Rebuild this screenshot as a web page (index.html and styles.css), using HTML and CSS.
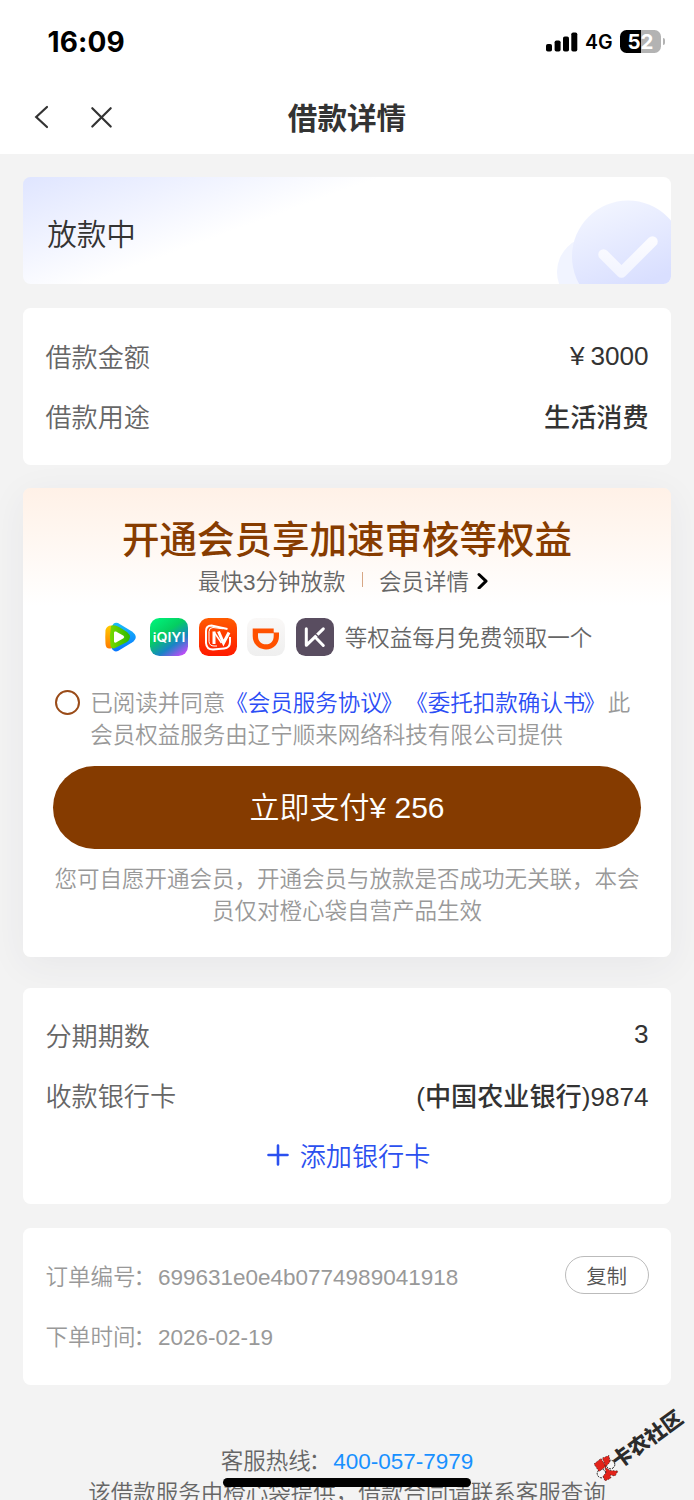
FILE: index.html
```html
<!DOCTYPE html>
<html lang="zh-CN">
<head>
<meta charset="utf-8">
<meta name="viewport" content="width=device-width, initial-scale=1">
<title>借款详情</title>
<link rel="stylesheet" href="styles.css">
</head>
<body>
<div class="screen">
  <header class="top">
    <div class="status">
      <span class="time">16:09</span>
      <div class="indicators">
        <svg class="signal" width="32" height="20" viewBox="0 0 32 20"><rect x="0" y="12" width="6" height="7.5" rx="1.8"/><rect x="8.6" y="8.5" width="6" height="11" rx="1.8"/><rect x="17" y="4.4" width="6" height="15.1" rx="1.8"/><rect x="25.3" y=".4" width="6" height="19.1" rx="1.8"/></svg>
        <span class="network">4G</span>
        <div class="battery">52</div>
        <span class="battery-cap"></span>
      </div>
    </div>
    <nav class="nav">
      <svg class="nav-icons" width="90" height="32" viewBox="0 0 90 32"><path d="M20 6 9.2 16 20 26M65.300 7.200 83.700 25.500M83.700 7.200 65.300 25.500"/></svg>
      <h1 class="title">借款详情</h1>
    </nav>
  </header>

  <main class="content">
    <section class="card state">
      <span>放款中</span>
      <svg class="state-art" width="115" height="84" viewBox="0 0 115 84">
        <defs>
          <linearGradient id="disc" x1="0.3" y1="0" x2="0.6" y2="0.75"><stop offset="0" stop-color="#f2f5ff"/><stop offset="1" stop-color="#d9dfff"/></linearGradient>
          <linearGradient id="tick" x1="0" y1="0" x2="0" y2="1"><stop offset="0" stop-color="#fbfbff"/><stop offset="1" stop-color="#f3f5ff"/></linearGradient>
        </defs>
        <circle cx="36.500" cy="72" r="35.500" fill="#f1f4ff"/>
        <circle cx="72" cy="56.500" r="56" fill="url(#disc)"/>
        <path d="M47.500 54.500 65.500 72.500 96.500 41.500" fill="none" stroke="url(#tick)" stroke-width="10.500" stroke-linecap="round" stroke-linejoin="round"/>
      </svg>
    </section>

    <section class="card rows loan">
      <div class="row"><span class="label">借款金额</span><span class="value"><span class="yen">¥</span>3000</span></div>
      <div class="row"><span class="label">借款用途</span><span class="value">生活消费</span></div>
    </section>

    <section class="card member">
      <h2 class="headline">开通会员享加速审核等权益</h2>
      <div class="subline">
        <span>最快3分钟放款</span><i class="divider"></i><span>会员详情</span>
        <svg class="chevron" width="12" height="18" viewBox="0 0 12 18"><path d="M2 3.500 9 10.200 2 17"/></svg>
      </div>
      <div class="perks">
        <svg width="38" height="38" viewBox="-3 0 38 38">
          <defs><linearGradient id="warm" x1="0" y1="0" x2="0" y2="1"><stop stop-color="#ffcb00"/><stop offset="1" stop-color="#ff7b00"/></linearGradient><linearGradient id="leaf" x1="0" y1="0" x2="1" y2="0"><stop stop-color="#78d900"/><stop offset="1" stop-color="#2fb900"/></linearGradient><linearGradient id="sky" x1="0" y1="0" x2="0" y2="1"><stop stop-color="#18bdf8"/><stop offset="1" stop-color="#0875ff"/></linearGradient></defs>
          <path d="M8 8Q10 3.500 14 5L28 13.500Q35.500 19 28 24.500L14 33Q10 34.500 7.500 30Z" fill="url(#sky)"/>
          <path d="M1.500 12Q3 7 8 7.500L12 12V27L8 30Q2 32 1.500 26Q1 19 1.500 12Z" fill="url(#warm)"/>
          <path d="M7 8Q10 6 15 9L23 14Q29 19 23 24L12 29.500Q8 32 6.500 28Q5 18 7 8Z" fill="url(#leaf)"/>
          <path d="M10 14.500Q10 13 12 13.500L19.500 17.800Q21 19 19.500 20.200L12 24.500Q10 25 10 23.500Z" fill="#fff"/>
        </svg>
        <svg width="38" height="38" viewBox="0 0 38 38">
          <defs><linearGradient id="iq" x1=".2" y1="0" x2=".9" y2="1"><stop offset="0" stop-color="#00ef78"/><stop offset=".35" stop-color="#05ce61"/><stop offset=".67" stop-color="#1884c5"/><stop offset="1" stop-color="#d744ff"/></linearGradient></defs>
          <rect width="38" height="38" rx="9.500" fill="url(#iq)"/>
          <text class="iq-word" x="2.800" y="24" textLength="32.500" lengthAdjust="spacingAndGlyphs">iQIYI</text>
        </svg>
        <svg width="38" height="38" viewBox="0 0 38 38">
          <defs><linearGradient id="mango" x1="0" y1="0" x2="0" y2="1"><stop stop-color="#ff5b00"/><stop offset="1" stop-color="#ff1a00"/></linearGradient></defs>
          <rect width="38" height="38" rx="9.500" fill="url(#mango)"/>
          <path d="M28.500 11 12.500 7.500Q7 7.500 7 13V25Q7.500 31.500 14 31.500L25 30.500Q31 30 31 24V19" fill="none" stroke="#fff" stroke-width="2"/>
          <path d="M24 10.800 14 9.500Q10 9.500 10 13.500V23.500Q10.500 28 15 28H18" fill="none" stroke="#fff" stroke-width="1"/>
          <path d="M15 13.500V26M19.500 13.500 24.500 25 30 14.500" fill="none" stroke="#fff" stroke-width="3"/>
          <path d="M15 14 22.500 25" fill="none" stroke="#fff" stroke-width="1.500"/>
        </svg>
        <svg width="38" height="38" viewBox="0 0 38 38">
          <defs><linearGradient id="pale" x1="0" y1="0" x2="0" y2="1"><stop stop-color="#faf8f7"/><stop offset="1" stop-color="#efefef"/></linearGradient></defs>
          <rect width="38" height="38" rx="9.500" fill="url(#pale)"/>
          <path fill-rule="evenodd" d="M5.700 10.500H26.700V14.500H32V18C32 26 26.500 31.500 19 31.500S5.700 26 5.700 18ZM11 15.200V18C11 23 14 26.300 19 26.300S26.700 23 26.700 18V15.200Z" fill="#ff5100"/>
        </svg>
        <svg width="38" height="38" viewBox="0 0 38 38"><rect width="38" height="38" rx="9.500" fill="#594d60"/><path d="M10.300 10.800V27.300L27.300 10.800M20.500 20.500 27.300 27.500" fill="none" stroke="#fff" stroke-width="3" stroke-linecap="round" stroke-linejoin="round"/><path d="M19 15.500 23.500 19.500" stroke="#594d60" stroke-width="1.200"/></svg>
        <span class="perk-text">等权益每月免费领取一个</span>
      </div>
      <div class="agree">
        <i class="radio"></i>
        <p class="agree-text">已阅读并同意<a class="link">《会员服务协议<span class="close">》</span>《委托扣款确认书<span class="close">》</span></a>此<br>会员权益服务由辽宁顺来网络科技有限公司提供</p>
      </div>
      <button class="pay" type="button">立即支付¥ 256</button>
      <p class="note">您可自愿开通会员，开通会员与放款是否成功无关联，本会<br>员仅对橙心袋自营产品生效</p>
    </section>

    <section class="card rows bank">
      <div class="row"><span class="label">分期期数</span><span class="value">3</span></div>
      <div class="row"><span class="label">收款银行卡</span><span class="value">(中国农业银行)9874</span></div>
      <div class="row add"><svg width="22" height="22" viewBox="0 0 22 22"><path d="M1.500 11H20.500M11 1.500V20.500"/></svg><span>添加银行卡</span></div>
    </section>

    <section class="card rows order">
      <div class="row"><span>订单编号<span class="colon">：</span>699631e0e4b0774989041918</span><button class="copy" type="button">复制</button></div>
      <div class="row"><span>下单时间<span class="colon">：</span>2026-02-19</span></div>
    </section>
  </main>

  <footer class="foot">
    <p>客服热线<span class="colon">：</span><a class="phone">400-057-7979</a></p>
    <p>该借款服务由橙心袋提供，借款合同请联系客服查询</p>
  </footer>

  <div class="home-bar"></div>
  <div class="stamp">
    <svg width="26" height="26" viewBox="0 0 26 26"><g fill="#f7f7f7" stroke="#111" stroke-width="1" stroke-dasharray="2 1"><circle cx="17.500" cy="9.500" r="4.300"/><circle cx="8.500" cy="18.500" r="4.300"/></g><g fill="#e2231a" stroke="#111" stroke-width=".6" stroke-dasharray="1.500 1.500"><path d="M1 9 8 3.500 13 11.500 6 16.500Z"/><path d="M9.500 3 16 .5 17 7 12.500 12Z"/><path d="M12 12 17 15.500 25 16 22 21 17 20 18 23 12 26 10 21 13 18Z"/></g></svg>
    <span class="stamp-text">卡农社区</span>
  </div>
</div>
</body>
</html>
```
FILE: styles.css
```css
* { box-sizing: border-box; margin: 0; padding: 0; }
body { background: #f3f3f3; }
.screen {
  position: relative;
  width: 694px;
  height: 1500px;
  overflow: hidden;
  background: #f3f3f3;
  color: #333;
  font-family: "Liberation Sans", "Noto Sans CJK SC", sans-serif;
  font-weight: 350;
  text-spacing-trim: space-all;
  white-space: nowrap;
}
button { font: inherit; border: 0; }

.top { height: 154px; background: #fff; }
.status { display: flex; justify-content: space-between; height: 82px; padding: 0 29px 0 47.500px; }
.time { font: 700 28px/85px Inter, sans-serif; color: #000; letter-spacing: 0.1px; }
.indicators { display: flex; align-items: center; height: 83px; color: #000; }
.signal { margin-right: 7px; }
.network { width: 28px; margin-right: 7px; padding-top: 1px; font: 600 19.500px/30px Inter, sans-serif; }
.battery {
  width: 41px;
  height: 23px;
  border-radius: 6.500px;
  background: linear-gradient(90deg, #000 0 21px, #b3b3b3 21px);
  color: #fff;
  font: 700 20.500px/24px Inter, sans-serif;
  text-align: center;
}
.battery-cap { width: 2.500px; height: 7px; margin-left: 1.500px; border-radius: 0 3px 3px 0; background: #b3b3b3; }

.nav { position: relative; height: 72px; }
.nav-icons { position: absolute; left: 27px; top: 19px; fill: none; stroke: #333; stroke-width: 2.200; stroke-linecap: round; }
.title { font-size: 29.600px; line-height: 73px; font-weight: 700; text-align: center; }

.content { display: flex; flex-direction: column; padding: 22.500px 22.700px 0; }
.card { border-radius: 7.500px; background: #fff; }

.state {
  position: relative;
  height: 107.500px;
  margin-bottom: 24px;
  padding-left: 24.500px;
  overflow: hidden;
  background: linear-gradient(160deg, #dfe5ff 0%, #fff 38%);
  font-size: 29.600px;
  line-height: 115px;
}
.state-art { position: absolute; right: 0; bottom: 0; }

.rows { padding: 0 22.700px; }
.row { display: flex; align-items: center; justify-content: space-between; height: 60px; font-size: 26.150px; }
.label { color: #666; }
.value { font-weight: 500; }
.yen { margin-right: 6px; }
.loan { height: 157px; margin-bottom: 23px; padding-top: 18px; }

.member {
  display: flex;
  flex-direction: column;
  height: 469px;
  margin-bottom: 30.500px;
  padding: 29px 30px 0;
  background: linear-gradient(180deg, #fff1e7 0, #fff 118px);
  box-shadow: 0 8px 38px rgba(50, 50, 80, 0.06);
}
.headline { height: 46px; color: #873c00; font-size: 37.500px; line-height: 46px; font-weight: 500; text-align: center; }
.subline { display: flex; align-items: center; justify-content: center; height: 33px; padding-right: 7px; color: #666; font-size: 22.500px; }
.divider { width: 1.500px; height: 15px; margin: 0 16px; background: #d7a785; }
.chevron { margin-left: 8px; fill: none; stroke: #000; stroke-width: 3; stroke-linecap: round; stroke-linejoin: round; }
.perks { display: flex; gap: 10.700px; align-items: center; height: 38px; margin-top: 22px; padding-left: 48.500px; }
.iq-word { fill: #fff; font: 600 12.500px Inter, sans-serif; }
.perk-text { padding-bottom: 3px; color: #666; font-size: 22.500px; }
.agree { display: flex; margin-top: 31.500px; }
.radio { width: 25px; height: 25px; margin: 2px 10px 0 2.500px; border: 2px solid #9a4b18; border-radius: 50%; }
.agree-text { color: #999; font-size: 22.500px; line-height: 32px; }
.link { color: #2b4df5; }
.close { margin: 0 2px 0 -2px; }
.pay { height: 83px; margin-top: 14.500px; border-radius: 42px; background: #853b00; color: #fff; font-size: 30px; line-height: 83px; }
.note { margin-top: 15px; color: #999; font-size: 22.500px; line-height: 32px; text-align: center; }

.bank { height: 216.500px; margin-bottom: 23.500px; padding-top: 17px; }
.add { justify-content: center; gap: 11px; padding-left: 3px; color: #2b50ef; }
.add svg { fill: none; stroke: #2b50ef; stroke-width: 2.600; stroke-linecap: round; }

.order { height: 157px; padding-top: 17.500px; color: #999; }
.order .row { font-size: 22.500px; }
.colon { margin: 0 2px 0 -2px; }
.copy { width: 84px; height: 38px; border: 1px solid #bbb; border-radius: 19px; background: #fff; color: #555; font-size: 20.500px; }

.foot { padding-top: 61px; color: #666; font-size: 22.500px; line-height: 32px; text-align: center; }
.phone { color: #1890ff; }

.home-bar { position: absolute; left: 223px; top: 1478px; width: 248px; height: 8.500px; border-radius: 5px; background: #000; }
.stamp { position: absolute; left: 593px; top: 1455px; }
.stamp-text {
  position: absolute;
  left: 20px;
  top: -6px;
  color: #2b2b2b;
  font: 900 20.500px/26px "Noto Sans CJK SC", sans-serif;
  transform: rotate(-36deg);
  transform-origin: 0 50%;
}
```
